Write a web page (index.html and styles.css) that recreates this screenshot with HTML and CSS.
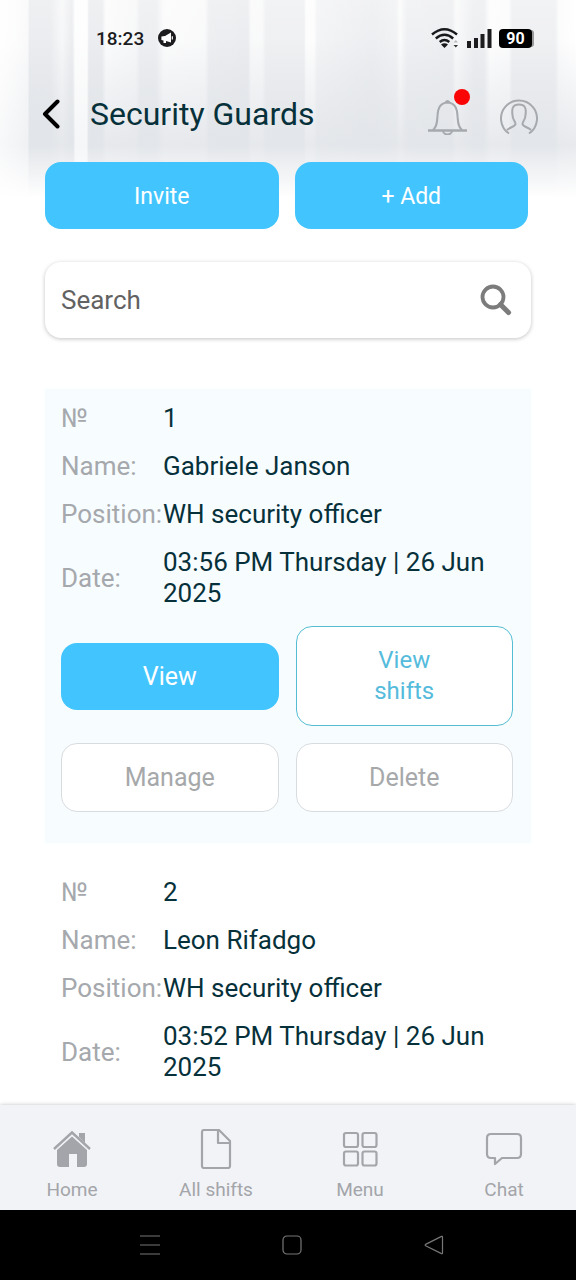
FILE: index.html
```html
<!DOCTYPE html>
<html lang="en">
<head>
<meta charset="utf-8">
<meta name="viewport" content="width=device-width, initial-scale=1">
<title>Security Guards</title>
<link rel="stylesheet" href="styles.css">
</head>
<body>
<div class="status-bar">
  <div class="status-group">
    <span class="clock">18:23</span>
    <svg class="notice-icon" viewBox="0 0 18 18" aria-hidden="true"><circle cx="9" cy="9" r="9" fill="#1c1c1e"/><path d="M3.400 7.400 7 7l6-3.400v10L8 12v2H5.500v-2.400L3.400 11z" fill="#fff"/><path d="M14.300 7.200v3.200" stroke="#fff" stroke-width="1.200"/></svg>
  </div>
  <div class="status-group status-right">
    <svg class="wifi-icon" viewBox="0 0 28 20" aria-hidden="true"><g fill="none" stroke="#18191b" stroke-width="2.400"><path d="M1 6.500Q13.500-4 26 6.500"/><path d="M4.800 10.500Q13.500 3 22.200 10.500"/><path d="M8.700 14Q13.500 10 18.300 14"/></g><path d="M10 16.500q3.500-2.500 7 0L13.500 20z" fill="#18191b"/><path d="M22.500 17h4.500l-2.200 2.500z" fill="#333"/><path d="M22.500 14.500h4.500l-2.200-2.500z" fill="#b5b7ba"/></svg>
    <svg class="signal-icon" viewBox="0 0 26 20" aria-hidden="true"><path d="M1 13h4v7H1zM8 10h4v10H8zM14.500 6h4v14h-4zM21.500 1h4v19h-4z" fill="#1c1c1e"/></svg>
    <span class="battery">90</span>
  </div>
</div>

<header class="app-header">
  <button class="icon-button back" type="button" aria-label="Back"><svg class="back-icon" viewBox="0 0 18 30" aria-hidden="true"><path d="M15.500 2.500 3 15l12.500 12.500" fill="none" stroke="#000" stroke-width="4" stroke-linecap="round" stroke-linejoin="round"/></svg></button>
  <h1 class="title">Security Guards</h1>
  <div class="header-tools">
    <button class="icon-button bell" type="button" aria-label="Notifications">
      <svg class="bell-icon" viewBox="0 0 39 36" aria-hidden="true"><g fill="none" stroke="#a6a9ad" stroke-width="2"><path d="M0 31.500h39" stroke-width="2.600"/><path d="M5 31C9 28 9 23 9.500 17 10 8 12.500 4 19.500 3.500c7 .500 9.500 4.500 10 13.500.500 6 .500 11 4.500 14"/><path d="M15 32c.500 4.500 8.500 4.500 9 0"/></g><path d="M16 4q3.500-6 7 0z" fill="#a6a9ad"/></svg>
      <span class="badge"></span>
    </button>
    <button class="icon-button" type="button" aria-label="Profile"><svg class="profile-icon" viewBox="0 0 38 36" aria-hidden="true"><g fill="none" stroke="#a6a9ad" stroke-width="2"><path d="M9 34.500a18 18 0 1 1 20 0"/><path d="M7 31c3-3 8-3 8.500-6C15.500 22 12.500 21 12.500 16 11.500 9 13 5.500 19 5.500S26.500 9 25.500 16c0 5-3 6-3 9 .500 3 5.500 3 8.500 6"/></g></svg></button>
  </div>
</header>

<main class="content">
  <div class="actions">
    <button class="button primary compact" type="button">Invite</button>
    <button class="button primary compact" type="button">+ Add</button>
  </div>

  <form class="search" role="search">
    <input class="search-input" type="text" placeholder="Search" aria-label="Search">
    <button class="icon-button" type="button" aria-label="Run search"><svg class="search-icon" viewBox="0 0 32 32" aria-hidden="true"><g fill="none" stroke="#7c7c7c"><circle cx="13" cy="13" r="10.500" stroke-width="3.800"/><path d="m20.500 20.500 8 8" stroke-width="5" stroke-linecap="round"/></g></svg></button>
  </form>

  <section class="guards">
    <article class="guard tinted">
      <dl class="fields">
        <dt>№</dt><dd>1</dd>
        <dt>Name:</dt><dd>Gabriele Janson</dd>
        <dt>Position:</dt><dd>WH security officer</dd>
        <dt>Date:</dt><dd>03:56 PM Thursday | 26 Jun 2025</dd>
      </dl>
      <div class="guard-actions">
        <button class="button primary" type="button">View</button>
        <button class="button outline" type="button">View shifts</button>
        <button class="button muted" type="button">Manage</button>
        <button class="button muted" type="button">Delete</button>
      </div>
    </article>
    <article class="guard">
      <dl class="fields">
        <dt>№</dt><dd>2</dd>
        <dt>Name:</dt><dd>Leon Rifadgo</dd>
        <dt>Position:</dt><dd>WH security officer</dd>
        <dt>Date:</dt><dd>03:52 PM Thursday | 26 Jun 2025</dd>
      </dl>
    </article>
  </section>
</main>

<nav class="tabs">
  <a class="tab" href="#home"><svg class="tab-icon" viewBox="0 0 40 40" aria-hidden="true"><path d="M27 4h6v10l-6-6z" fill="#a3a5aa"/><path d="M2 20 20 3.500 38 20" fill="none" stroke="#a3a5aa" stroke-width="2.400"/><path d="M20 7.500 35 21v14q0 3-3 3h-7V25h-8v13H8q-3 0-3-3V21z" fill="#a3a5aa"/></svg>Home</a>
  <a class="tab" href="#shifts"><svg class="tab-icon" viewBox="0 0 40 40" aria-hidden="true"><g fill="none" stroke="#a3a5aa" stroke-width="2.200" stroke-linejoin="round"><path d="M8 1h15l11 11v25q0 2-2 2H8q-2 0-2-2V3q0-2 2-2z"/><path d="M22 1v13h12"/></g></svg>All shifts</a>
  <a class="tab" href="#menu"><svg class="tab-icon" viewBox="0 0 40 40" aria-hidden="true"><g fill="none" stroke="#a3a5aa" stroke-width="2.200"><rect x="4" y="4" width="14" height="14" rx="2"/><rect x="22.500" y="4" width="14" height="14" rx="2"/><rect x="4" y="22.500" width="14" height="14" rx="2"/><rect x="22.500" y="22.500" width="14" height="14" rx="2"/></g></svg>Menu</a>
  <a class="tab" href="#chat"><svg class="tab-icon" viewBox="0 0 40 40" aria-hidden="true"><path d="M7 5h26q4 0 4 4v16q0 4-4 4H18l-7 6v-6H7q-4 0-4-4V9q0-4 4-4z" fill="none" stroke="#a3a5aa" stroke-width="2.200" stroke-linejoin="round"/></svg>Chat</a>
</nav>

<div class="system-bar">
  <button class="icon-button" type="button" aria-label="Recent apps"><svg class="system-icon" viewBox="0 0 20 20" aria-hidden="true"><path d="M0 1h20M0 10h20M0 19h20" stroke="#777" stroke-width="1.200"/></svg></button>
  <button class="icon-button" type="button" aria-label="Home screen"><svg class="system-icon" viewBox="0 0 20 20" aria-hidden="true"><rect x="1" y="1" width="18" height="18" rx="4" fill="none" stroke="#777" stroke-width="1.200"/></svg></button>
  <button class="icon-button" type="button" aria-label="System back"><svg class="system-icon" viewBox="0 0 20 20" aria-hidden="true"><path d="M18.500 2v16q0 1-1 .6L1.600 10.700q-1-.7 0-1.300L17.500 1.400q1-.4 1 .6z" fill="none" stroke="#777" stroke-width="1.200"/></svg></button>
</div>
</body>
</html>
```
FILE: styles.css
```css
* {
  box-sizing: border-box;
}

body {
  margin: 0;
  height: 100vh;
  display: flex;
  flex-direction: column;
  overflow: hidden;
  font-family: Roboto, "Noto Sans", sans-serif;
  font-size: 26px;
  line-height: 31px;
  color: #07313a;
  background-color: #fff;
  background-image:
    linear-gradient(to bottom, rgba(255, 255, 255, 0) 145px, #fff 198px),
    linear-gradient(to right, transparent 74px, rgba(255, 255, 255, 0.6) 75px, rgba(255, 255, 255, 0.6) 87px, transparent 88px),
    linear-gradient(to right, rgba(255, 255, 255, 0.7) 0, rgba(255, 255, 255, 0.4) 28px, transparent 29px),
    linear-gradient(to bottom, rgba(226, 229, 233, 0) 40px, rgba(226, 229, 233, 0.8) 145px),
    linear-gradient(to right, rgba(255, 255, 255, 0.9) 0, rgba(255, 255, 255, 0.5) 28px, rgba(255, 255, 255, 0) 29px, rgba(255, 255, 255, 0) 50px, rgba(255, 255, 255, 0.6) 62px, rgba(255, 255, 255, 0) 72px, rgba(255, 255, 255, 0.8) 75px, rgba(255, 255, 255, 0.8) 87px, rgba(255, 255, 255, 0) 89px, rgba(255, 255, 255, 0) 102px, rgba(255, 255, 255, 0.8) 106px, rgba(255, 255, 255, 0.6) 136px, rgba(255, 255, 255, 0.1) 140px, rgba(255, 255, 255, 0.1) 156px, rgba(255, 255, 255, 0.8) 164px, rgba(255, 255, 255, 0.7) 205px, rgba(255, 255, 255, 0.1) 209px, rgba(255, 255, 255, 0) 248px, rgba(255, 255, 255, 0.7) 251px, rgba(255, 255, 255, 0.7) 262px, rgba(255, 255, 255, 0.2) 266px, rgba(255, 255, 255, 0.2) 304px, rgba(255, 255, 255, 0.9) 306px, rgba(255, 255, 255, 0.9) 314px, rgba(255, 255, 255, 0.4) 317px, rgba(255, 255, 255, 0.1) 372px, rgba(255, 255, 255, 0.3) 396px, rgba(255, 255, 255, 0.8) 400px, rgba(255, 255, 255, 0.2) 407px, rgba(255, 255, 255, 0.1) 452px, rgba(255, 255, 255, 0.7) 456px, rgba(255, 255, 255, 0.1) 474px, rgba(255, 255, 255, 0.1) 484px, rgba(255, 255, 255, 0.9) 490px, rgba(255, 255, 255, 0.8) 509px, rgba(255, 255, 255, 0.2) 512px, rgba(255, 255, 255, 0.2) 555px, rgba(255, 255, 255, 0.8) 559px, #fff 576px),
    linear-gradient(to bottom, #eff0f2 0, #e9ebee 60px, #e2e5e9 145px);
  background-size: 100% 200px;
  background-repeat: no-repeat;
}

button,
input {
  font: inherit;
}

svg {
  display: block;
}

.icon-button {
  display: block;
  padding: 0;
  border: 0;
  background: none;
}

.status-bar {
  flex: none;
  height: 76px;
  padding: 0 44px 0 96px;
  display: flex;
  align-items: center;
  justify-content: space-between;
}

.status-group {
  display: flex;
  align-items: center;
  gap: 14px;
}

.status-right {
  gap: 7px;
}

.clock {
  font-size: 19px;
  font-weight: 500;
  color: #1c1c1e;
}

.notice-icon {
  width: 18px;
  height: 18px;
}

.wifi-icon {
  width: 28px;
  height: 20px;
}

.signal-icon {
  width: 26px;
  height: 20px;
}

.battery {
  width: 33px;
  border-radius: 4px;
  background: #000;
  box-shadow: 3px 0 0 -1px #9a9a9a;
  color: #fff;
  font-size: 16px;
  line-height: 19px;
  font-weight: 700;
  text-align: center;
}

.app-header {
  flex: none;
  height: 76px;
  padding: 0 38px 0 42px;
  display: flex;
  align-items: center;
}

.back-icon {
  width: 18px;
  height: 30px;
}

.title {
  flex: 1;
  margin: 0 0 0 30px;
  font-size: 32px;
  line-height: 36px;
  font-weight: 400;
}

.header-tools {
  display: flex;
  gap: 33px;
  padding-top: 5px;
}

.bell {
  position: relative;
}

.bell-icon {
  width: 39px;
  height: 36px;
}

.badge {
  position: absolute;
  top: -10px;
  right: -3px;
  width: 16px;
  height: 16px;
  border-radius: 50%;
  background: #f90505;
}

.profile-icon {
  width: 38px;
  height: 36px;
}

.content {
  flex: 1;
  min-height: 0;
  overflow: hidden;
  padding: 10px 45px 0;
}

.actions {
  display: grid;
  grid-template-columns: 1fr 1fr;
  gap: 16px;
  padding-right: 3px;
}

.button {
  padding: 18px 60px;
  border: 0;
  border-radius: 16px;
  font-size: 25px;
}

.primary {
  background: #42c5ff;
  color: #fff;
}

.compact {
  padding: 19px 60px 17px;
  font-size: 23px;
}

.outline {
  border: 1px solid #54bdd4;
  background: #fff;
  color: #55bbdc;
  font-size: 24px;
}

.muted {
  border: 1px solid #d9dcdf;
  background: #fff;
  color: #a6a8aa;
}

.search {
  display: flex;
  align-items: center;
  margin-top: 33px;
  padding: 22px 19px 22px 16px;
  border-radius: 16px;
  background: #fff;
  box-shadow: 0 1px 4px rgba(0, 0, 0, 0.24);
}

.search-input {
  flex: 1;
  min-width: 0;
  height: 32px;
  padding: 0;
  border: 0;
  background: none;
  color: #626262;
}

.search-input::placeholder {
  color: #626262;
  opacity: 1;
}

.search-icon {
  width: 32px;
  height: 32px;
}

.guards {
  display: flex;
  flex-direction: column;
  gap: 20px;
  margin-top: 51px;
}

.guard {
  padding: 14px 18px 31px 16px;
}

.tinted {
  background: #f7fcff;
  box-shadow: 0 0 3px #f7fcff;
}

.fields {
  display: grid;
  grid-template-columns: 102px 1fr;
  row-gap: 17px;
  align-items: center;
  margin: 0;
}

.fields dt {
  color: #a5a8ac;
  white-space: nowrap;
}

.fields dd {
  margin: 0;
}

.guard-actions {
  display: grid;
  grid-template-columns: 1fr 1fr;
  gap: 17px;
  align-items: center;
  margin-top: 17px;
}

.tabs {
  position: relative;
  flex: none;
  display: grid;
  grid-template-columns: repeat(4, 1fr);
  padding: 24px 0 8px;
  background: #f2f3f6;
  box-shadow: 0 0 4px rgba(0, 0, 0, 0.25);
}

.tab {
  display: flex;
  flex-direction: column;
  align-items: center;
  gap: 9px;
  font-size: 19px;
  line-height: 24px;
  color: #a3a5aa;
  text-decoration: none;
}

.tab-icon {
  width: 40px;
  height: 40px;
}

.system-bar {
  position: relative;
  flex: none;
  height: 70px;
  padding: 0 132px 0 140px;
  display: flex;
  align-items: center;
  justify-content: space-between;
  background: #000;
}

.system-icon {
  width: 20px;
  height: 20px;
}
```
